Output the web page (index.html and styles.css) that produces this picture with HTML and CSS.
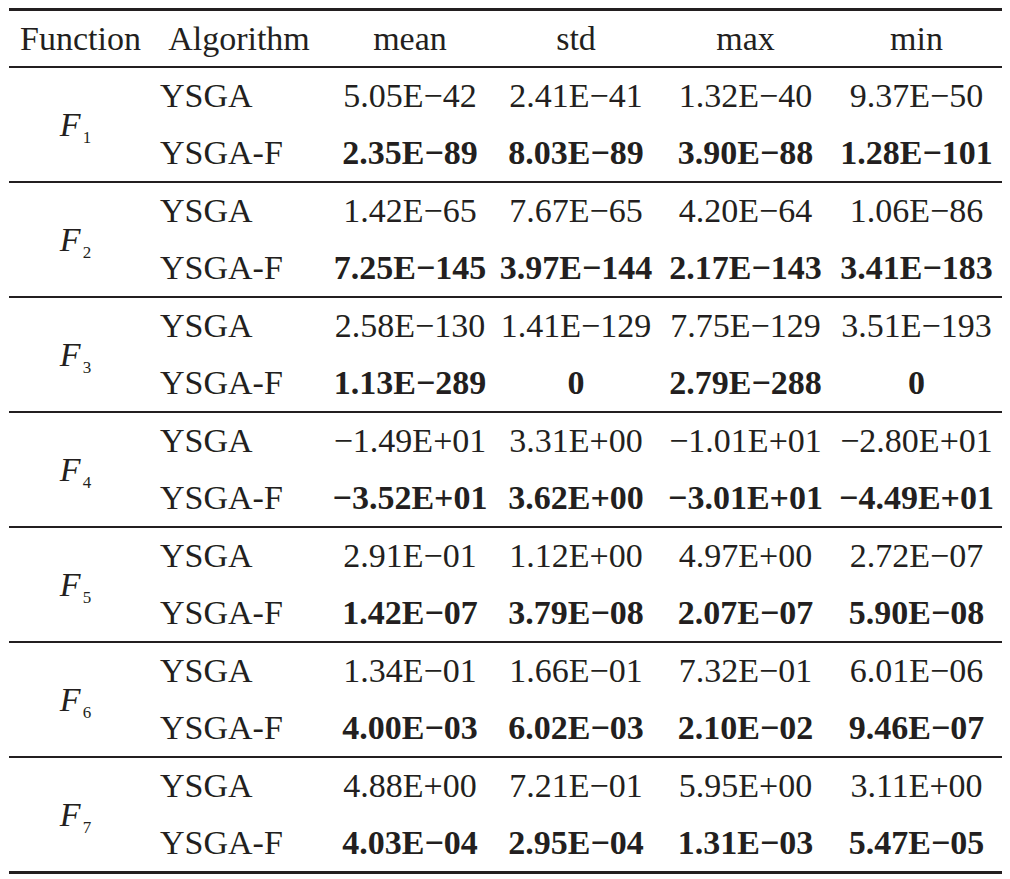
FILE: index.html
```html
<!DOCTYPE html>
<html lang="en">
<head>
<meta charset="utf-8">
<title>Results table</title>
<link rel="stylesheet" href="styles.css">
</head>
<body>
<table class="results">
  <colgroup>
    <col class="c-fn"><col class="c-alg"><col class="c-mean"><col class="c-std"><col class="c-max"><col class="c-min">
  </colgroup>
  <thead>
    <tr class="head">
      <th>Function</th><th>Algorithm</th><th>mean</th><th>std</th><th>max</th><th>min</th>
    </tr>
  </thead>
  <tbody>
    <tr class="r1"><td class="fn" rowspan="2"><i>F</i><sub>1</sub></td><td class="alg">YSGA</td><td>5.05E−42</td><td>2.41E−41</td><td>1.32E−40</td><td>9.37E−50</td></tr>
    <tr class="r2"><td class="alg">YSGA-F</td><td class="b">2.35E−89</td><td class="b">8.03E−89</td><td class="b">3.90E−88</td><td class="b">1.28E−101</td></tr>

    <tr class="r1"><td class="fn" rowspan="2"><i>F</i><sub>2</sub></td><td class="alg">YSGA</td><td>1.42E−65</td><td>7.67E−65</td><td>4.20E−64</td><td>1.06E−86</td></tr>
    <tr class="r2"><td class="alg">YSGA-F</td><td class="b">7.25E−145</td><td class="b">3.97E−144</td><td class="b">2.17E−143</td><td class="b">3.41E−183</td></tr>

    <tr class="r1"><td class="fn" rowspan="2"><i>F</i><sub>3</sub></td><td class="alg">YSGA</td><td>2.58E−130</td><td>1.41E−129</td><td>7.75E−129</td><td>3.51E−193</td></tr>
    <tr class="r2"><td class="alg">YSGA-F</td><td class="b">1.13E−289</td><td class="b">0</td><td class="b">2.79E−288</td><td class="b">0</td></tr>

    <tr class="r1"><td class="fn" rowspan="2"><i>F</i><sub>4</sub></td><td class="alg">YSGA</td><td>−1.49E+01</td><td>3.31E+00</td><td>−1.01E+01</td><td>−2.80E+01</td></tr>
    <tr class="r2"><td class="alg">YSGA-F</td><td class="b">−3.52E+01</td><td class="b">3.62E+00</td><td class="b">−3.01E+01</td><td class="b">−4.49E+01</td></tr>

    <tr class="r1"><td class="fn" rowspan="2"><i>F</i><sub>5</sub></td><td class="alg">YSGA</td><td>2.91E−01</td><td>1.12E+00</td><td>4.97E+00</td><td>2.72E−07</td></tr>
    <tr class="r2"><td class="alg">YSGA-F</td><td class="b">1.42E−07</td><td class="b">3.79E−08</td><td class="b">2.07E−07</td><td class="b">5.90E−08</td></tr>

    <tr class="r1"><td class="fn" rowspan="2"><i>F</i><sub>6</sub></td><td class="alg">YSGA</td><td>1.34E−01</td><td>1.66E−01</td><td>7.32E−01</td><td>6.01E−06</td></tr>
    <tr class="r2"><td class="alg">YSGA-F</td><td class="b">4.00E−03</td><td class="b">6.02E−03</td><td class="b">2.10E−02</td><td class="b">9.46E−07</td></tr>

    <tr class="r1 last"><td class="fn" rowspan="2"><i>F</i><sub>7</sub></td><td class="alg">YSGA</td><td>4.88E+00</td><td>7.21E−01</td><td>5.95E+00</td><td>3.11E+00</td></tr>
    <tr class="r2 last"><td class="alg">YSGA-F</td><td class="b">4.03E−04</td><td class="b">2.95E−04</td><td class="b">1.31E−03</td><td class="b">5.47E−05</td></tr>
  </tbody>
</table>
</body>
</html>
```
FILE: styles.css
```css
html, body {
  margin: 0;
  padding: 0;
  background: #ffffff;
}
body {
  padding: 8px 8px 0 9px;
  font-family: "Liberation Serif", "Times New Roman", serif;
  color: #231f20;
}
.results {
  border-collapse: separate;
  border-spacing: 0;
  table-layout: fixed;
  width: 993px;
  font-size: 34px;
  line-height: 1;
}
.c-fn { width: 141px; }
.c-alg { width: 178px; }
.c-mean { width: 164px; }
.c-std { width: 168px; }
.c-max { width: 171px; }
.c-min { width: 171px; }

.results th,
.results td {
  padding: 0;
  text-align: center;
  vertical-align: middle;
  white-space: nowrap;
  font-weight: normal;
}
.head th {
  height: 55px;
  border-top: 3px solid #231f20;
  border-bottom: 2px solid #231f20;
}
.head th:nth-child(1) { text-align: left; padding-left: 11px; }
.r1 td { height: 56px; }
.r2 td { height: 57px; border-bottom: 2px solid #231f20; }
.results td.fn { border-bottom: 2px solid #231f20; padding-right: 8px; }
.r2.last td, .results .last td.fn { border-bottom-width: 3px; }
.results td.alg { text-align: left; padding-left: 10px; }
.results td.b { font-weight: bold; }
.fn i { font-style: italic; }
.fn sub {
  font-size: 17px;
  vertical-align: -7px;
  margin-left: 2px;
  line-height: 0;
}
```
